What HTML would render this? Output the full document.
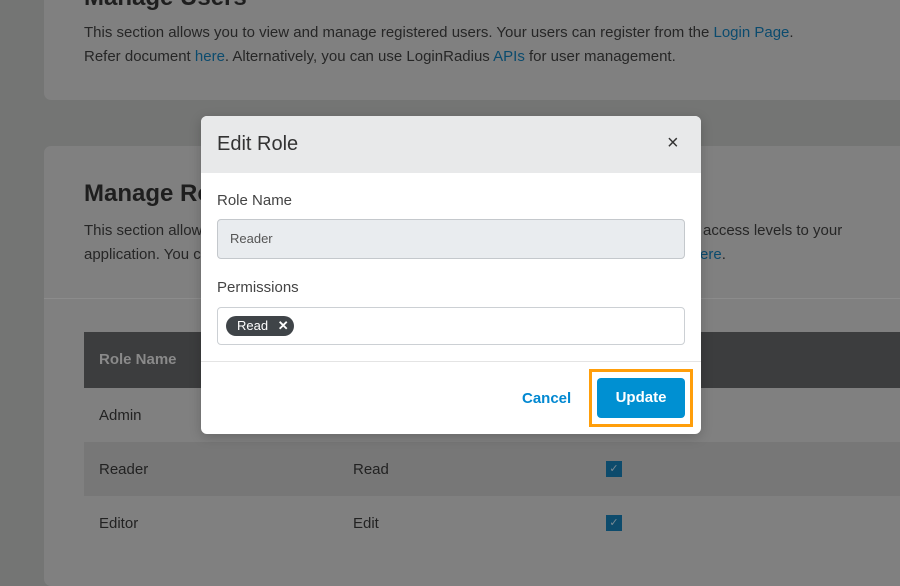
<!DOCTYPE html>
<html style="background:#747574"><head><style>
*{margin:0;padding:0;box-sizing:border-box}
body{width:900px;height:564px;overflow:hidden;background:#747574;font-family:"Liberation Sans",sans-serif;position:relative;color:#2b2b2b}
.card{position:absolute;left:44px;right:-10px;background:#808080;border-radius:7px}
.t{position:absolute;font-size:15px;color:#262626;white-space:nowrap}
a{color:#0b4b6e;text-decoration:none}
h2{position:absolute;font-size:24px;font-weight:bold;color:#1e1e1e;white-space:nowrap}
.row{position:absolute;left:84px;right:0;height:54px}
.row span{position:absolute;top:19px;font-size:15px;color:#222}
.cb{position:absolute;width:16px;height:16px;background:#0d4b6c;color:#7a8a94;font-size:11px;text-align:center;line-height:16px}
.modal{position:absolute;left:201px;top:116px;width:500px;height:318px;background:#fff;border-radius:6px;overflow:hidden;box-shadow:0 3px 12px rgba(0,0,0,.2)}
.mh{height:57px;background:#e8e9ea;position:relative}
.lbl{position:absolute;left:16px;font-size:15px;color:#444}
.inp{position:absolute;left:16px;width:468px;border:1px solid #ccd0d4;border-radius:4px}
</style></head><body>
<div class="card" style="top:-20px;height:120px"></div>
<h2 style="left:84px;top:-16px">Manage Users</h2>
<div class="t" style="left:84px;top:24px">This section allows you to view and manage registered users. Your users can register from the <a>Login Page</a>.</div>
<div class="t" style="left:84px;top:48px">Refer document <a>here</a>. Alternatively, you can use LoginRadius <a>APIs</a> for user management.</div>

<div class="card" style="top:146px;height:440px"></div>
<div style="position:absolute;left:44px;right:0;top:298px;height:1px;background:#8c8c8c"></div>
<h2 style="left:84px;top:180px">Manage Roles</h2>
<div class="t" style="left:84px;top:222px">This section allows you</div>
<div class="t" style="left:703px;top:222px">access levels to your</div>
<div class="t" style="left:84px;top:246px">application. You c</div>
<div class="t" style="left:700px;top:246px"><a>ere</a>.</div>

<div class="row" style="top:332px;height:56px;background:#3c3d3e"><span style="left:15px;top:19px;color:#8a8a8a;font-weight:bold">Role Name</span></div>
<div class="row" style="top:388px"><span style="left:15px">Admin</span></div>
<div class="row" style="top:442px;background:#777"><span style="left:15px">Reader</span><span style="left:269px">Read</span><div class="cb" style="left:522px;top:19px">✓</div></div>
<div class="row" style="top:496px"><span style="left:15px">Editor</span><span style="left:269px">Edit</span><div class="cb" style="left:522px;top:19px">✓</div></div>

<div class="modal">
<div class="mh"><div style="position:absolute;left:16px;top:17px;font-size:20px;color:#333">Edit Role</div>
<div style="position:absolute;left:466px;top:16px;font-size:20px;color:#333">×</div></div>
<div class="lbl" style="top:76px">Role Name</div>
<div class="inp" style="top:103px;height:40px;background:#e9ecef;border-color:#c4c8cc"><span style="position:absolute;left:12px;top:11px;font-size:13px;color:#555">Reader</span></div>
<div class="lbl" style="top:163px">Permissions</div>
<div class="inp" style="top:191px;height:38px"><span style="position:absolute;left:8px;top:8px;width:68px;height:20px;background:#3f4448;border-radius:10px;color:#fff;font-size:13px;line-height:20px;padding-left:11px">Read <b style="margin-left:6px">✕</b></span></div>
<div style="position:absolute;left:0;right:0;top:245px;height:1px;background:#e4e4e4"></div>
<div style="position:absolute;left:321px;top:274px;font-size:15px;font-weight:bold;color:#0288d1">Cancel</div>
<div style="position:absolute;left:388px;top:253px;width:104px;height:58px;border:3px solid #ff9e0a"></div>
<div style="position:absolute;left:396px;top:262px;width:88px;height:40px;background:#0090d2;border-radius:4px;color:#fff;font-weight:bold;font-size:15px;text-align:center;line-height:40px">Update</div>
</div>
</body></html>
